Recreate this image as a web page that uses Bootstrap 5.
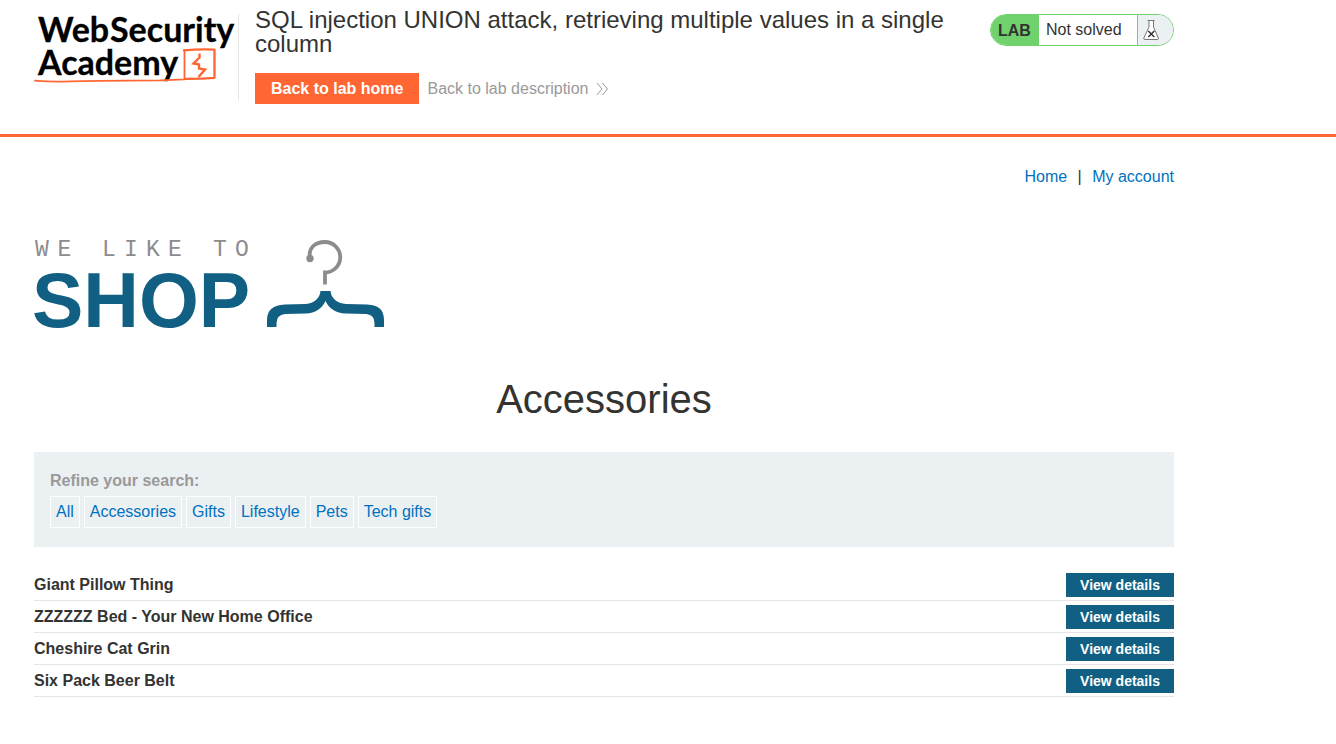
<!DOCTYPE html>
<html lang="en">
<head>
<meta charset="utf-8">
<meta name="viewport" content="width=device-width, initial-scale=1">
<title>SQL injection UNION attack, retrieving multiple values in a single column</title>
<link href="https://cdn.jsdelivr.net/npm/bootstrap@5.3.0/dist/css/bootstrap.min.css" rel="stylesheet">
<style>
  body { font-family: "Liberation Sans", Arial, sans-serif; font-size: 16px; line-height: 20px; color: #333332; background: #fff; }
  a { color: #0071bd; text-decoration: none; }
  .shell { max-width: 1208px; padding: 0 34px; }
  .lab-header { border-bottom: 3px solid #ff6633; padding-bottom: 30px; }
  .logo-link { margin-top: 14px; border-right: 1px solid #e5e5e5; width: 205px; height: 86px; }
  .logo-link svg, .shop-logo { overflow: visible; }
  .lab-title { font-size: 24px; line-height: 24px; margin-bottom: 17px; }
  .title-area { padding: 8px 0 0 16px; max-width: 735px; }
  .btn-flat { border: 0; border-radius: 0; color: #fff; font-weight: 700; }
  .btn-lab { background: #ff6633; font-size: 16px; line-height: 20px; padding: 6px 16px 5px; }
  .btn-shop { background: #115f82; font-size: 14px; line-height: 16px; width: 108px; padding: 4px 0; }
  .btn-flat:hover { color: #fff; background: #333332; }
  .muted-link { color: #999; }
  .lab-status { margin-top: 14px; height: 32px; border: 1px solid #6fd26c; border-radius: 16px; overflow: hidden; }
  .status-tag { background: #6fd26c; width: 48px; padding: 2px 0 0 7px; font-weight: 700; }
  .status-text { width: 98px; padding-left: 7px; }
  .status-flask { width: 36px; background: #ebf0f3; border-left: 1px solid #6fd26c; padding-left: 5px; }
  .top-links { padding-top: 30px; }
  .link-bar { padding: 0 6px; }
  .shop-logo { margin-top: 48px; height: 98px; }
  .page-title { font-size: 40px; line-height: 48px; margin: 42px 0 29px; }
  .filters { background: #ebf0f3; padding: 19px 16px; color: #999; }
  .filters a { border: 1px solid #fff; padding: 5px; line-height: 20px; }
  .filter-list { margin-top: 5px; }
  .products { margin: 22px 0 0; }
  .products td, .products th { border-bottom: 1px solid #e5e5e5; padding: 4px 0 3px; }
</style>
</head>
<body>
<header class="lab-header">
  <div class="shell d-flex align-items-start">
    <a class="logo-link flex-shrink-0 d-block" href="#" aria-label="Web Security Academy">
      <svg class="d-block" width="204" height="76" viewBox="34 14 204 76" aria-hidden="true">
        <g fill="#000" stroke="#000" stroke-width=".3" font-family="Lato,'Liberation Sans',sans-serif" font-weight="700" font-size="34">
          <text x="38" y="42">Web</text><text x="110" y="42">Security</text><text x="38" y="75">Academy</text>
        </g>
        <g fill="none" stroke="#ff6633" stroke-linecap="round" stroke-linejoin="round">
          <path stroke-width="1.8" d="M35 80.7Q52 82 70 81.3T160 80.3L184.500 79.300V50"/>
          <path stroke-width="2.3" d="M184 50.300Q199 49 214.500 49.600V77.800Q200 79 185 78.800"/>
          <path stroke-width="2.400" stroke-linejoin="miter" stroke-linecap="butt" d="M199.500 53.500V57.500L193.500 63.500L199 64.500V68.500L205 69.500L198.500 77"/>
        </g>
      </svg>
    </a>
    <div class="title-area flex-grow-1">
      <h2 class="lab-title fw-normal">SQL injection UNION attack, retrieving multiple values in a single column</h2>
      <div class="d-flex align-items-center gap-2">
        <button type="button" class="btn btn-flat btn-lab">Back to lab home</button>
        <a class="muted-link d-flex align-items-center gap-2" href="#">Back to lab description
          <svg width="13" height="14" viewBox="0 0 13 14" fill="none" stroke="#999" aria-hidden="true"><path d="M1 1l5 6-5 6M6.500 1l5 6-5 6"/></svg>
        </a>
      </div>
    </div>
    <div class="lab-status d-flex flex-shrink-0 align-items-stretch ms-auto">
      <span class="status-tag d-flex align-items-center">LAB</span>
      <span class="status-text d-flex align-items-center">Not solved</span>
      <span class="status-flask d-flex align-items-center">
        <svg width="17" height="22" viewBox="0 0 17 22" fill="#fff" stroke="#777" aria-hidden="true"><path d="M4.500 1.500h7M6 1.500v6.500L.8 19q-.3 1.500 1 1.500h12.700q1.200 0 .8-1.500L10.500 8V1.500"/><path stroke="#333332" stroke-width="1.500" d="M5.300 12l6 6M11.300 12l-6 6"/></svg>
      </span>
    </div>
  </div>
</header>
<main class="shell">
  <nav class="top-links d-flex justify-content-end" aria-label="Account">
    <a href="#">Home</a><span class="link-bar">&nbsp;|&nbsp;</span><a href="#">My account</a>
  </nav>
  <svg class="shop-logo d-block" width="352" viewBox="34 235 352 98" role="img" aria-label="We like to shop">
    <text y="255.500" text-anchor="middle" x="42 64.500 86 109 131 153 175 197 220 242" fill="#8c8c8c" font-family="'Liberation Mono','Courier New',monospace" font-size="23">WE LIKE TO</text>
    <text x="32" y="327" fill="#115f82" font-family="'Liberation Sans',sans-serif" font-weight="700" font-size="77">SHOP</text>
    <path d="M310 258C308 248 315 242 325 242a15 15 0 0 1 0 30.500V284.500" fill="none" stroke="#8c8c8e" stroke-width="3.800"/>
    <circle cx="310" cy="258.500" r="3.700" fill="#8c8c8e"/>
    <path fill="#115f82" d="M320.500 291h10C331 298 337 303.500 346 304L367 304.500C379 305 384 310 384 320V327h-9.500v-4q0-8-8-9L346 313.500C336 313 329 309 325.500 301C322 309 315 313 306 313.500L285 314q-8.500 1-8.500 9v4H267v-7C267 310 273 305 285 304.500L306 304C314 303.500 320 298 320.500 291Z"/>
  </svg>
  <h1 class="page-title fw-normal text-center">Accessories</h1>
  <section class="filters">
    <strong class="d-block">Refine your search:</strong>
    <div class="filter-list d-flex flex-wrap gap-1">
      <a href="#">All</a><a href="#">Accessories</a><a href="#">Gifts</a><a href="#">Lifestyle</a><a href="#">Pets</a><a href="#">Tech gifts</a>
    </div>
  </section>
  <table class="products w-100">
    <tbody>
      <tr><th scope="row">Giant Pillow Thing</th><td class="text-end"><button type="button" class="btn btn-flat btn-shop">View details</button></td></tr>
      <tr><th scope="row">ZZZZZZ Bed - Your New Home Office</th><td class="text-end"><button type="button" class="btn btn-flat btn-shop">View details</button></td></tr>
      <tr><th scope="row">Cheshire Cat Grin</th><td class="text-end"><button type="button" class="btn btn-flat btn-shop">View details</button></td></tr>
      <tr><th scope="row">Six Pack Beer Belt</th><td class="text-end"><button type="button" class="btn btn-flat btn-shop">View details</button></td></tr>
    </tbody>
  </table>
</main>
<script src="https://cdn.jsdelivr.net/npm/bootstrap@5.3.0/dist/js/bootstrap.bundle.min.js"></script>
</body>
</html>
